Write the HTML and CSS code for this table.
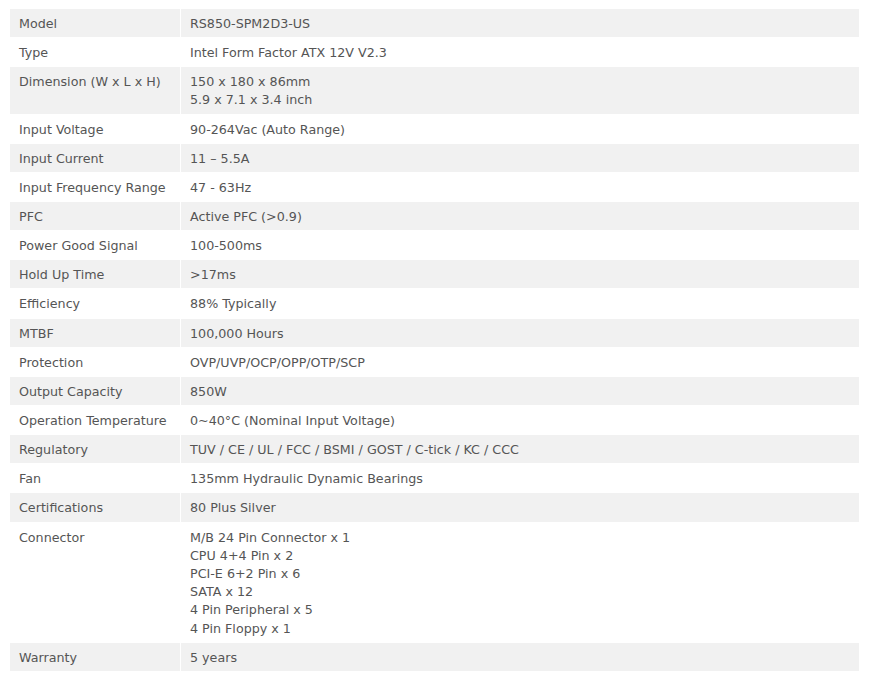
FILE: index.html
```html
<!DOCTYPE html>
<html>
<head>
<meta charset="utf-8">
<link rel="stylesheet" href="styles.css">
</head>
<body>
<table class="spec">
<tr><td class="k">Model</td><td>RS850-SPM2D3-US</td></tr>
<tr><td class="k">Type</td><td>Intel Form Factor ATX 12V V2.3</td></tr>
<tr><td class="k">Dimension (W x L x H)</td><td>150 x 180 x 86mm<br>5.9 x 7.1 x 3.4 inch</td></tr>
<tr><td class="k">Input Voltage</td><td>90-264Vac (Auto Range)</td></tr>
<tr><td class="k">Input Current</td><td>11 – 5.5A</td></tr>
<tr><td class="k">Input Frequency Range</td><td>47 - 63Hz</td></tr>
<tr><td class="k">PFC</td><td>Active PFC (&gt;0.9)</td></tr>
<tr><td class="k">Power Good Signal</td><td>100-500ms</td></tr>
<tr><td class="k">Hold Up Time</td><td>&gt;17ms</td></tr>
<tr><td class="k">Efficiency</td><td>88% Typically</td></tr>
<tr><td class="k">MTBF</td><td>100,000 Hours</td></tr>
<tr><td class="k">Protection</td><td>OVP/UVP/OCP/OPP/OTP/SCP</td></tr>
<tr><td class="k">Output Capacity</td><td>850W</td></tr>
<tr><td class="k">Operation Temperature</td><td>0~40°C (Nominal Input Voltage)</td></tr>
<tr><td class="k">Regulatory</td><td>TUV / CE / UL / FCC / BSMI / GOST / C-tick / KC / CCC</td></tr>
<tr><td class="k">Fan</td><td>135mm Hydraulic Dynamic Bearings</td></tr>
<tr><td class="k">Certifications</td><td>80 Plus Silver</td></tr>
<tr><td class="k">Connector</td><td>M/B 24 Pin Connector x 1<br>CPU 4+4 Pin x 2<br>PCI-E 6+2 Pin x 6<br>SATA x 12<br>4 Pin Peripheral x 5<br>4 Pin Floppy x 1</td></tr>
<tr><td class="k">Warranty</td><td>5 years</td></tr>
</table>
</body>
</html>
```
FILE: styles.css
```css
html, body {
  margin: 0;
  padding: 0;
  background: #fff;
}
body {
  padding: 8px 9px 0 9px;
  font-family: "DejaVu Sans", Verdana, sans-serif;
  font-size: 12.7px;
  line-height: 18.2px;
  color: #555;
}
.spec {
  width: 851px;
  border-collapse: separate;
  border-spacing: 1px;
}
.spec td {
  padding: 6px 9px 3.95px;
  vertical-align: top;
}
.spec td.k {
  width: 152px;
}
.spec tr:nth-child(odd) td {
  background: #f1f1f1;
}
```
